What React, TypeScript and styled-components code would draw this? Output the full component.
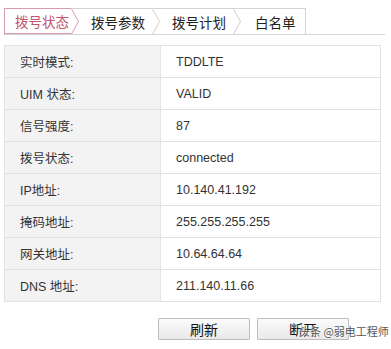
import React from 'react'
import styled, { createGlobalStyle } from 'styled-components'

const GlobalStyle = createGlobalStyle`
    body {
        margin: 0;
        background: #fff;
        font-family: "Liberation Sans", "Noto Sans CJK SC", sans-serif;
        color: #333;
    }
`

const tabs = ['拨号状态', '拨号参数', '拨号计划', '白名单']

const rows: [string, string][] = [
    ['实时模式:', 'TDDLTE'],
    ['UIM 状态:', 'VALID'],
    ['信号强度:', '87'],
    ['拨号状态:', 'connected'],
    ['IP地址:', '10.140.41.192'],
    ['掩码地址:', '255.255.255.255'],
    ['网关地址:', '10.64.64.64'],
    ['DNS 地址:', '211.140.11.66'],
]

// breadcrumb arrow between tabs
const Chevron: React.FC<{ active?: boolean }> = ({ active }) => (
    <ChevronSvg width="9" height="25" viewBox="0 0 9 25">
        <polyline
            points="0.5,0 7.5,12.5 0.5,25"
            fill="none"
            stroke={active ? '#d99aab' : '#cfcfcf'}
            strokeWidth="1"
        />
    </ChevronSvg>
)

export default function App() {
    return (
        <>
            <GlobalStyle />
            <Page>
                <TabStrip>
                    <TabGroup>
                        {tabs.map((t, i) => (
                            <Tab key={t}>
                                <TabLabel $active={i === 0} $index={i} $last={i === tabs.length - 1}>{t}</TabLabel>
                                {i < tabs.length - 1 && <Chevron active={i === 0} />}
                            </Tab>
                        ))}
                    </TabGroup>
                </TabStrip>

                <InfoTable>
                    <tbody>
                        {rows.map(([label, value]) => (
                            <Row key={label}>
                                <LabelCell>{label}</LabelCell>
                                <ValueCell>{value}</ValueCell>
                            </Row>
                        ))}
                    </tbody>
                </InfoTable>

                <ButtonRow>
                    <GrayButton>刷新</GrayButton>
                    <GrayButton>断开</GrayButton>
                    <Watermark>头条 @弱电工程师</Watermark>
                </ButtonRow>
            </Page>
        </>
    )
}

const Page = styled.div`
    width: 391px;
    height: 349px;
    padding: 8px 6px 0 4px;
    box-sizing: border-box;
    overflow: hidden;
`

const TabStrip = styled.div`
    display: flex;
    border-bottom: 1px solid #d4d4d4;
`

const TabGroup = styled.div`
    display: flex;
    height: 25px;
    border-top: 1px solid #d4d4d4;
    border-right: 1px solid #d4d4d4;
`

const Tab = styled.div`
    display: flex;
    align-items: stretch;
`

const TabLabel = styled.div<{ $active?: boolean; $index: number; $last?: boolean }>`
    display: flex;
    align-items: center;
    box-sizing: border-box;
    height: ${p => (p.$active ? 26 : 25)}px;
    margin-top: ${p => (p.$active ? '-1px' : '0')};
    padding-left: ${p => (p.$index === 0 ? 10 : p.$index === 3 ? 12 : 10)}px;
    padding-right: ${p => (p.$index === 0 ? 2 : p.$last ? 9 : 7)}px;
    font-size: 13.5px;
    color: ${p => (p.$active ? '#c4566f' : '#222')};
    border: 1px solid ${p => (p.$active ? '#d99aab' : 'transparent')};
    border-right: none;
`

const ChevronSvg = styled.svg`
    display: block;
    flex: none;
`

const InfoTable = styled.table`
    margin-top: 10px;
    width: 377px;
    border-collapse: collapse;
    border: 1px solid #e2e2e2;
    font-size: 12.5px;
`

const Row = styled.tr`
    height: 32px;
    border-bottom: 1px solid #e0e0e0;
`

const LabelCell = styled.td`
    width: 140px;
    padding: 0 0 0 15px;
    background: #f3f3f3;
    color: #333;
    font-size: 12.5px;
    border-right: 1px solid #e4e4e4;
`

const ValueCell = styled.td`
    padding: 0 0 0 15px;
    background: #fff;
    color: #333;
`

const ButtonRow = styled.div`
    position: relative;
    display: flex;
    gap: 7px;
    margin: 16px 0 0 154px;
`

const GrayButton = styled.button`
    width: 92px;
    height: 22px;
    padding: 0;
    border: 1px solid #bdbdbd;
    border-radius: 1px;
    background: linear-gradient(#fbfbfb, #e9e9e9);
    font-family: "Noto Sans CJK SC", sans-serif;
    font-size: 14px;
    color: #111;
    line-height: 20px;
`

const Watermark = styled.span`
    position: absolute;
    left: 141px;
    top: 5px;
    font-family: "Noto Sans CJK SC", sans-serif;
    font-size: 11px;
    color: #555;
    text-shadow: 0 0 2px #fff, 0 0 2px #fff;
    white-space: nowrap;
`
